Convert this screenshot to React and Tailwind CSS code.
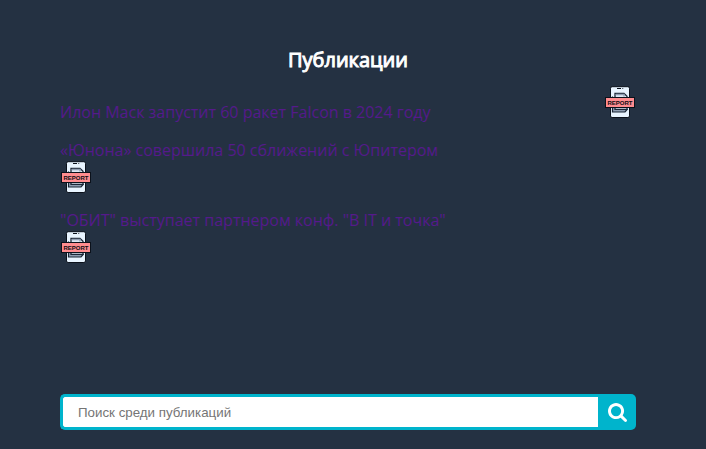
const posts = [
  { title: 'Илон Маск запустит 60 ракет Falcon в 2024 году', wide: true },
  { title: '«Юнона» совершила 50 сближений с Юпитером' },
  { title: '"ОБИТ" выступает партнером конф. "В IT и точка"' },
];

function ReportIcon() {
  return (
    <svg viewBox="0 0 32 32" className="block size-8 shrink-0" role="img" aria-label="Report">
      <rect x="6.5" y="0.7" width="19" height="30.8" rx="1.6" fill="#e8f4ff" stroke="#0b111b" strokeWidth="1" />
      <path d="M13 2.5h4M18.4 2.5h0.8" stroke="#0b111b" strokeWidth="1" />
      <path d="M8.5 10.5v15.5h12.5l2.5-3" fill="#8f9eb2" stroke="#1b2636" strokeWidth="1.2" />
      <path d="M11 7.3h9l3 3v13h-12z" fill="#dce9f6" stroke="#1b2636" strokeWidth="1.3" />
      <path d="M11.8 8.5h8.2v2" fill="none" stroke="#8f9eb2" strokeWidth="1.3" />
      <rect x="1.5" y="11.5" width="29" height="10" fill="#ff8c8f" stroke="#0b111b" strokeWidth="1" />
      <text x="16" y="19" textAnchor="middle" fill="#0b0b12" className="font-['Liberation_Sans',sans-serif] text-[6px] font-bold">REPORT</text>
    </svg>
  );
}

export default function App() {
  return (
    <main className="min-h-screen bg-[#243142] pt-11 pr-[70px] pb-[19px] pl-[60px] font-['Open_Sans','Noto_Sans',sans-serif]">
      <h1 className="text-center text-xl leading-8 font-normal text-white [-webkit-text-stroke:1px_white]">Публикации</h1>
      <ul className="mt-2.5 min-h-[308px] space-y-4 text-base leading-[22px] text-[#551a8b]">
        {posts.map((post) => (
          <li key={post.title} className={post.wide ? 'flex items-start justify-between' : 'block'}>
            <a href="#" className={post.wide ? 'mt-[15px]' : 'block'}>{post.title}</a>
            <ReportIcon />
          </li>
        ))}
      </ul>
      <form role="search" className="flex h-9" onSubmit={(e) => e.preventDefault()}>
        <input
          type="search"
          aria-label="Поиск среди публикаций"
          placeholder="Поиск среди публикаций"
          className="min-w-0 flex-1 rounded-l-[5px] border-[3px] border-r-0 border-[#00b4cc] bg-white px-[15px] [font:revert] text-[#333333] outline-none placeholder:text-[#757575]"
        />
        <button type="submit" aria-label="Найти" className="flex w-[38px] items-center justify-center rounded-r-[5px] bg-[#00b4cc] text-white">
          <svg viewBox="0 0 1664 1664" className="size-[19px]" fill="currentColor" aria-hidden="true">
            <path d="M1152 704q0-185-131.5-316.5T704 256 387.5 387.5 256 704t131.5 316.5T704 1152t316.5-131.5T1152 704zm512 832q0 52-38 90t-90 38q-54 0-90-38l-343-342q-179 124-399 124-143 0-273.5-55.5t-225-150-150-225T0 704t55.5-273.5 150-225 225-150T704 0t273.5 55.5 225 150 150 225T1408 704q0 220-124 399l343 343q37 37 37 90z" />
          </svg>
        </button>
      </form>
    </main>
  );
}
